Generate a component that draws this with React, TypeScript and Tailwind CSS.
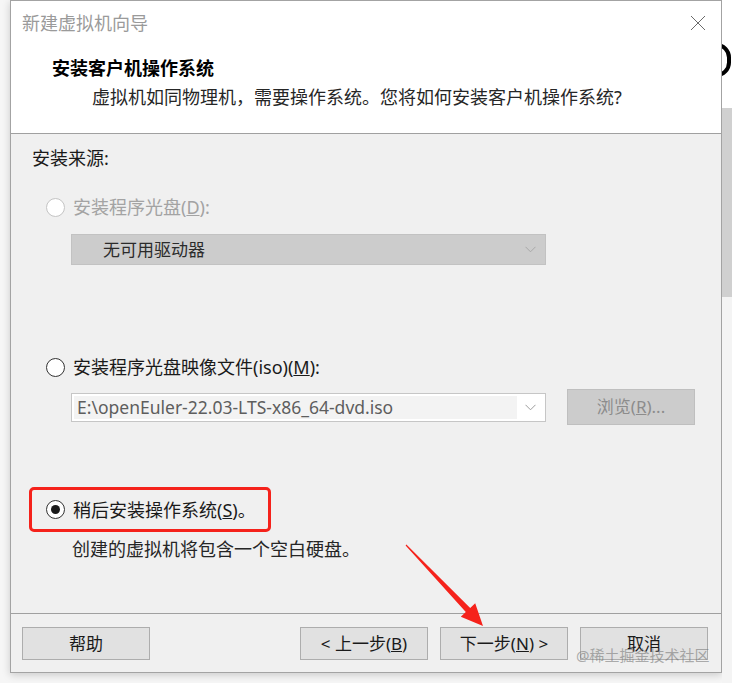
import React from "react";

const font = {
  fontFamily: '"Noto Sans", "Noto Sans CJK SC", sans-serif',
};

const Chevron = ({ color = "#9a9a9a" }: { color?: string }) => (
  <svg width="11" height="7" viewBox="0 0 11 7" fill="none">
    <path d="M0.5 0.8 L5.5 5.8 L10.5 0.8" stroke={color} strokeWidth="1" />
  </svg>
);

const Radio = ({
  checked = false,
  disabled = false,
}: {
  checked?: boolean;
  disabled?: boolean;
}) => (
  <span
    className={
      disabled
        ? "flex h-[19px] w-[19px] shrink-0 items-center justify-center rounded-full border border-[#c4c4c4] bg-white"
        : "flex h-[19px] w-[19px] shrink-0 items-center justify-center rounded-full border border-[#333333] bg-white"
    }
  >
    {checked && <span className="h-[9px] w-[9px] rounded-full bg-[#1a1a1a]" />}
  </span>
);

const FooterButton = ({ children }: { children: React.ReactNode }) => (
  <button className="flex h-[33px] w-[128px] items-center justify-center border border-[#adadad] bg-[#e1e1e1] text-[17px] text-[#1a1a1a]">
    {children}
  </button>
);

export default function App() {
  return (
    <div
      className="relative flex h-[683px] w-[732px] overflow-hidden bg-[#f6f6f6]"
      style={font}
    >
      <div className="w-[10px] shrink-0" />

      {/* dialog window */}
      <div className="flex h-[673px] w-[712px] shrink-0 flex-col border border-[#a3a3a3] bg-[#f0f0f0] shadow-[0_2px_8px_rgba(0,0,0,0.18)]">
        {/* title bar */}
        <div className="flex h-[44px] shrink-0 items-center justify-between bg-white pl-[11px] pr-[15px]">
          <span className="text-[18px] leading-[24px] text-[#9a9a9a]">
            新建虚拟机向导
          </span>
          <svg width="16" height="16" viewBox="0 0 16 16" className="mb-[1px]">
            <path d="M1 1 L15 15 M15 1 L1 15" stroke="#6b6b6b" strokeWidth="1" />
          </svg>
        </div>

        {/* header */}
        <div className="flex h-[89px] shrink-0 flex-col border-b border-[#a0a0a0] bg-white pl-[41px] pt-[11px]">
          <span className="text-[18px] font-bold leading-[24px] text-black">
            安装客户机操作系统
          </span>
          <span className="ml-[40px] mt-[5px] text-[18px] leading-[24px] text-[#262626]">
            虚拟机如同物理机，需要操作系统。您将如何安装客户机操作系统?
          </span>
        </div>

        {/* body */}
        <div className="flex flex-1 flex-col border-b border-[#a0a0a0] text-[18px] leading-[24px]">
          <span className="ml-[21px] mt-[12px] text-[#1a1a1a]">安装来源:</span>

          <div className="ml-[35px] mt-[25px] flex items-center gap-[8px] text-[#a3a3a3]">
            <Radio disabled />
            <span>
              安装程序光盘(<span className="underline">D</span>):
            </span>
          </div>

          <div className="ml-[60px] mt-[15px] flex h-[31px] w-[475px] items-center justify-between border border-[#c2c2c2] bg-[#cccccc] pl-[31px] pr-[9px]">
            <span className="text-[17px] text-[#2b2b2b]">无可用驱动器</span>
            <Chevron color="#a8a8a8" />
          </div>

          <div className="ml-[35px] mt-[90px] flex items-center gap-[8px] text-[#1a1a1a]">
            <Radio />
            <span>
              安装程序光盘映像文件(iso)(<span className="underline">M</span>):
            </span>
          </div>

          <div className="mt-[10px] flex items-center">
            <div className="ml-[60px] flex h-[29px] w-[475px] items-center border border-[#c6c6c6] bg-white p-[2px]">
              <div className="flex h-full flex-1 items-center bg-[#f3f3f3] pl-[3px] text-[17.5px] text-[#5e5e5e]">
                E:\openEuler-22.03-LTS-x86_64-dvd.iso
              </div>
              <div className="flex w-[26px] items-center justify-center">
                <Chevron color="#9c9c9c" />
              </div>
            </div>
            <button className="ml-[21px] flex h-[36px] w-[128px] items-center justify-center border border-[#bfbfbf] bg-[#cccccc] text-[17px] text-[#8c8c8c]">
              浏览(<span className="underline">R</span>)...
            </button>
          </div>

          <div className="ml-[18px] mt-[62px] flex h-[45px] w-[242px] items-center gap-[8px] rounded-[5px] border-[3px] border-[#f5221b] pl-[14px] text-[#1a1a1a]">
            <Radio checked />
            <span>
              稍后安装操作系统(<span className="underline">S</span>)。
            </span>
          </div>

          <span className="ml-[61px] mt-[5px] text-[#262626]">
            创建的虚拟机将包含一个空白硬盘。
          </span>
        </div>

        {/* footer */}
        <div className="flex h-[58px] shrink-0 items-start pl-[11px] pr-[13px] pt-[13px]">
          <FooterButton>帮助</FooterButton>
          <div className="flex-1" />
          <div className="flex gap-[12px]">
            <FooterButton>
              &lt; 上一步(<span className="underline">B</span>)
            </FooterButton>
            <FooterButton>
              下一步(<span className="underline">N</span>) &gt;
            </FooterButton>
            <FooterButton>取消</FooterButton>
          </div>
        </div>
      </div>

      {/* background app peeking out on the right */}
      <div className="flex w-[10px] shrink-0 flex-col overflow-hidden">
        <div className="h-[108px] bg-white pt-[43px]">
          <div className="ml-[-20px] h-[34px] w-[29px] rounded-full border-[4px] border-black" />
        </div>
        <div className="h-[189px] bg-[#d0d0d0]" />
        <div className="flex-1 bg-[#f4f4f4]" />
      </div>

      {/* red annotation arrow */}
      <svg
        className="pointer-events-none absolute left-0 top-0"
        width="732"
        height="683"
        viewBox="0 0 732 683"
      >
        <polygon
          points="406.4,544.6 470.2,607.9 475.2,603.2 483,626 460.8,616.8 465.8,612.1 405.6,545.4"
          fill="#f5221b"
        />
      </svg>

      {/* watermark */}
      <span className="pointer-events-none absolute left-[576px] top-[645px] text-[15px] leading-[20px] text-[rgba(110,110,110,0.55)]">
        @稀土掘金技术社区
      </span>
    </div>
  );
}
